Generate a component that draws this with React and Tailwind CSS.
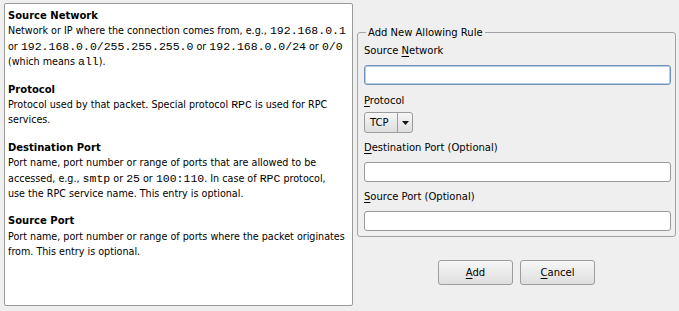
const Mono = ({ children }) => (
  <span className="font-['Liberation_Mono',monospace] text-[11.5px]">{children}</span>
);

const Mn = ({ children }) => <span className="underline underline-offset-2">{children}</span>;

const HELP = [
  {
    title: "Source Network",
    body: (
      <>
        Network or IP where the connection comes from, e.g., <Mono>192.168.0.1</Mono>
        <br />
        or <Mono>192.168.0.0/255.255.255.0</Mono> or <Mono>192.168.0.0/24</Mono> or <Mono>0/0</Mono>
        <br />
        (which means <Mono>all</Mono>).
      </>
    ),
  },
  {
    title: "Protocol",
    body: (
      <>
        Protocol used by that packet. Special protocol <Mono>RPC</Mono> is used for RPC
        <br />
        services.
      </>
    ),
  },
  {
    title: "Destination Port",
    body: (
      <>
        Port name, port number or range of ports that are allowed to be
        <br />
        accessed, e.g., <Mono>smtp</Mono> or <Mono>25</Mono> or <Mono>100:110</Mono>. In case of <Mono>RPC</Mono> protocol,
        <br />
        use the RPC service name. This entry is optional.
      </>
    ),
  },
  {
    title: "Source Port",
    body: (
      <>
        Port name, port number or range of ports where the packet originates
        <br />
        from. This entry is optional.
      </>
    ),
  },
];

const Label = ({ children }) => <div className="h-[16px] leading-[16px]">{children}</div>;

const Input = ({ focused }) => (
  <div
    className={`h-[20px] rounded-[3px] bg-white border ${
      focused ? "border-[#6f93bd] shadow-[inset_0_0_0_1px_#b7cbe2]" : "border-[#9a9a9a]"
    }`}
  />
);

const Button = ({ children }) => (
  <button className="w-[75px] h-[25px] rounded-[3px] border border-[#9c9c9c] bg-gradient-to-b from-[#f7f7f7] to-[#dedede] text-black">
    {children}
  </button>
);

export default function App() {
  return (
    <div className="w-[679px] h-[311px] bg-[#efefef] flex font-['DejaVu_Sans',sans-serif] text-[10px] text-black overflow-hidden">
      <div className="ml-[4px] mt-[3px] w-[349px] h-[303px] bg-white border border-[#9a9a9a] rounded-[2px] px-[3px] pt-[4px] text-[9.6px] leading-[15.4px] whitespace-nowrap">
        {HELP.map((item) => (
          <div key={item.title} className="mb-[12px]">
            <div className="font-bold text-[10px]">{item.title}</div>
            <div>{item.body}</div>
          </div>
        ))}
      </div>

      <div className="ml-[4px] w-[319px] flex flex-col">
        <fieldset className="mt-[25px] border border-[#a3a3a3] rounded-[3px] pl-[6px] pr-[4px] pt-[3px] pb-[5px]">
          <legend className="ml-[2px] px-[2px] leading-[15px]">Add New Allowing Rule</legend>
          <Label>
            Source <Mn>N</Mn>etwork
          </Label>
          <div className="mt-[6px]">
            <Input focused />
          </div>
          <div className="mt-[8px]">
            <Label>
              <Mn>P</Mn>rotocol
            </Label>
          </div>
          <div className="mt-[3px] w-[49px] h-[21px] flex rounded-[3px] border border-[#9c9c9c] bg-gradient-to-b from-[#f7f7f7] to-[#dedede]">
            <div className="w-[33px] flex items-center pl-[5px] border-r border-[#9c9c9c]">TCP</div>
            <div className="flex-1 flex items-center justify-center">
              <svg width="7" height="4" viewBox="0 0 7 4">
                <path d="M0 0h7L3.5 4z" fill="#111" />
              </svg>
            </div>
          </div>
          <div className="mt-[7px]">
            <Label>
              <Mn>D</Mn>estination Port (Optional)
            </Label>
          </div>
          <div className="mt-[6px]">
            <Input />
          </div>
          <div className="mt-[7px]">
            <Label>
              <Mn>S</Mn>ource Port (Optional)
            </Label>
          </div>
          <div className="mt-[6px]">
            <Input />
          </div>
        </fieldset>
        <div className="mt-[23px] flex justify-center gap-[7px]">
          <Button>
            <Mn>A</Mn>dd
          </Button>
          <Button>
            <Mn>C</Mn>ancel
          </Button>
        </div>
      </div>
    </div>
  );
}
